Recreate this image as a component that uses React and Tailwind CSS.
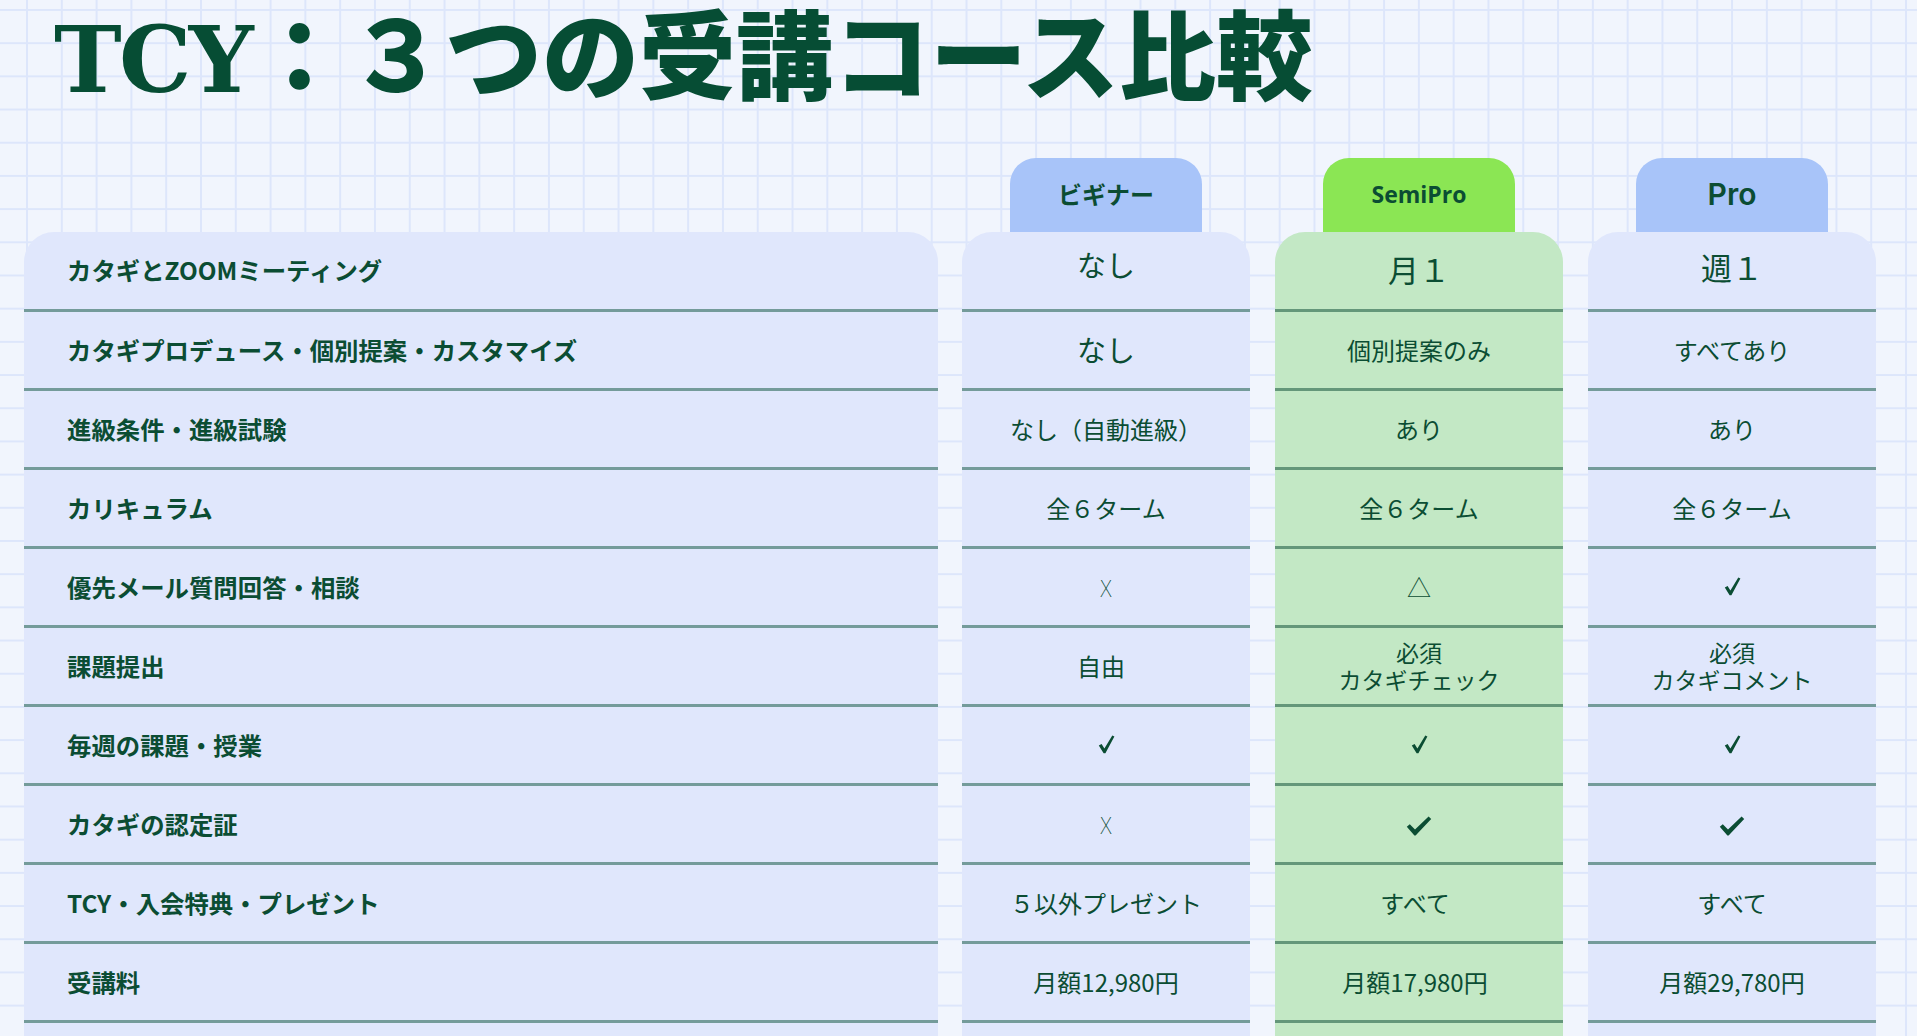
import React from "react";

const rows = [
  {
    label: "カタギとZOOMミーティング",
    first: true,
    cells: [
      { text: "なし", cls: "text-[29px] pb-[12px]" },
      { text: "月１", cls: "text-[31px] pb-[2px]" },
      { text: "週１", cls: "text-[31px] pb-[6px]" },
    ],
  },
  {
    label: "カタギプロデュース・個別提案・カスタマイズ",
    cells: [
      { text: "なし", cls: "text-[29px]" },
      { text: "個別提案のみ" },
      { text: "すべてあり" },
    ],
  },
  {
    label: "進級条件・進級試験",
    cells: [{ text: "なし（自動進級）" }, { text: "あり" }, { text: "あり" }],
  },
  {
    label: "カリキュラム",
    cells: [{ text: "全６ターム" }, { text: "全６ターム" }, { text: "全６ターム" }],
  },
  {
    label: "優先メール質問回答・相談",
    cells: [{ kind: "x" }, { kind: "tri" }, { kind: "check" }],
  },
  {
    label: "課題提出",
    cells: [
      { text: "自由", cls: "pr-[10px]" },
      { lines: ["必須", "カタギチェック"] },
      { lines: ["必須", "カタギコメント"] },
    ],
  },
  {
    label: "毎週の課題・授業",
    cells: [{ kind: "check" }, { kind: "check" }, { kind: "check" }],
  },
  {
    label: "カタギの認定証",
    cells: [{ kind: "x" }, { kind: "bigcheck" }, { kind: "bigcheck" }],
  },
  {
    label: "TCY・入会特典・プレゼント",
    cells: [{ text: "５以外プレゼント" }, { text: "すべて", cls: "pr-[8px]" }, { text: "すべて" }],
  },
  {
    label: "受講料",
    cells: [
      { text: "月額12,980円" },
      { text: "月額17,980円", cls: "pr-[8px]" },
      { text: "月額29,780円" },
    ],
  },
];

const plans = [
  {
    name: "ビギナー",
    tab: "bg-[#a8c4f9]",
    body: "bg-[#e0e7fc]",
    line: "border-[#749b9a]",
    nameCls: "text-[24px] font-bold [font-family:'Noto_Sans_CJK_JP',sans-serif]",
  },
  {
    name: "SemiPro",
    tab: "bg-[#8be654]",
    body: "bg-[#c3e8c5]",
    line: "border-[#64977a]",
    nameCls: "text-[23px] font-bold [font-family:'Open_Sans',sans-serif]",
  },
  {
    name: "Pro",
    tab: "bg-[#a8c4f9]",
    body: "bg-[#e0e7fc]",
    line: "border-[#749b9a]",
    nameCls: "text-[30px] font-semibold [font-family:Inter,sans-serif]",
  },
];

function SmallCheck() {
  return (
    <svg width="17" height="19" viewBox="0 0 17 19" fill="none">
      <path d="M0.8 10.6 L3.6 8.9 L6.4 13.6 L14.3 0.6 L16.4 1.6 L7.4 18.2 L5.6 18.2 Z" fill="#0b4d33" />
    </svg>
  );
}

function WideCheck() {
  return (
    <svg width="26" height="20" viewBox="0 0 26 20" fill="none">
      <path d="M0.8 10.8 L3.8 8.2 L9 13.6 L22.6 0.6 L25.2 3 L9.6 19.4 L8.4 19.4 Z" fill="#0b4d33" />
    </svg>
  );
}

function CellContent({ cell }) {
  if (cell.kind === "x") {
    return (
      <span className="text-[23px] font-thin [font-family:'Noto_Sans_CJK_JP',sans-serif]">
        X
      </span>
    );
  }
  if (cell.kind === "tri") {
    return <span className="text-[24px] font-light">△</span>;
  }
  if (cell.kind === "check") {
    return (
      <span className="pb-[2px]">
        <SmallCheck />
      </span>
    );
  }
  if (cell.kind === "bigcheck") {
    return (
      <span className="pt-[4px]">
        <WideCheck />
      </span>
    );
  }
  if (cell.lines) {
    return (
      <span className="flex flex-col items-center text-[23px] leading-[27px]">
        {cell.lines.map((l) => (
          <span key={l}>{l}</span>
        ))}
      </span>
    );
  }
  return <span className={cell.cls?.includes("text-[") ? "" : "text-[24px]"}>{cell.text}</span>;
}

function PlanColumn({ plan, index }) {
  return (
    <div className="flex w-[288px] flex-col">
      <div
        className={`mx-auto flex h-[74px] w-[192px] items-center justify-center rounded-t-[26px] pb-[2px] ${plan.tab}`}
      >
        <span className={`text-[#0b4d33] ${plan.nameCls}`}>{plan.name}</span>
      </div>
      <div className={`rounded-t-[30px] ${plan.body}`}>
        {rows.map((r) => {
          const cell = r.cells[index];
          return (
            <div
              key={r.label}
              className={`flex items-center justify-center border-b-[3px] text-center text-[#0b4d33] ${plan.line} ${
                r.first ? "h-[80px]" : "h-[79px]"
              } ${cell.cls || ""}`}
            >
              <CellContent cell={cell} />
            </div>
          );
        })}
        <div className="h-[40px]" />
      </div>
    </div>
  );
}

export default function App() {
  return (
    <div className="min-h-screen w-full overflow-hidden bg-[#f1f5fd] bg-[linear-gradient(to_right,#dde6fb_2px,transparent_2px),linear-gradient(to_bottom,#dde6fb_2px,transparent_2px)] bg-[size:34.8px_33.2px] bg-[position:26px_9px] [font-family:'Noto_Sans_CJK_JP',sans-serif]">
      <h1 className="flex h-[108px] items-baseline whitespace-nowrap pl-[54px] text-[97px] leading-[100px] font-black text-[#064d34]">
        <span className="text-[91px] tracking-[-0.03em] [font-family:'DejaVu_Serif',serif]">TCY</span>
        <span>：３つの受講コース比較</span>
      </h1>

      <div className="mt-[50px] flex gap-[24px] pl-[24px]">
        <div className="flex w-[914px] flex-col">
          <div className="h-[74px]" />
          <div className="rounded-t-[30px] bg-[#e0e7fc]">
            {rows.map((r) => (
              <div
                key={r.label}
                className={`flex items-center border-b-[3px] border-[#749b9a] pl-[43px] text-[24.4px] font-bold text-[#0b4d33] ${
                  r.first ? "h-[80px]" : "h-[79px]"
                }`}
              >
                {r.label}
              </div>
            ))}
            <div className="h-[40px]" />
          </div>
        </div>

        <div className="flex gap-[25px]">
          {plans.map((p, i) => (
            <PlanColumn key={p.name} plan={p} index={i} />
          ))}
        </div>
      </div>
    </div>
  );
}
